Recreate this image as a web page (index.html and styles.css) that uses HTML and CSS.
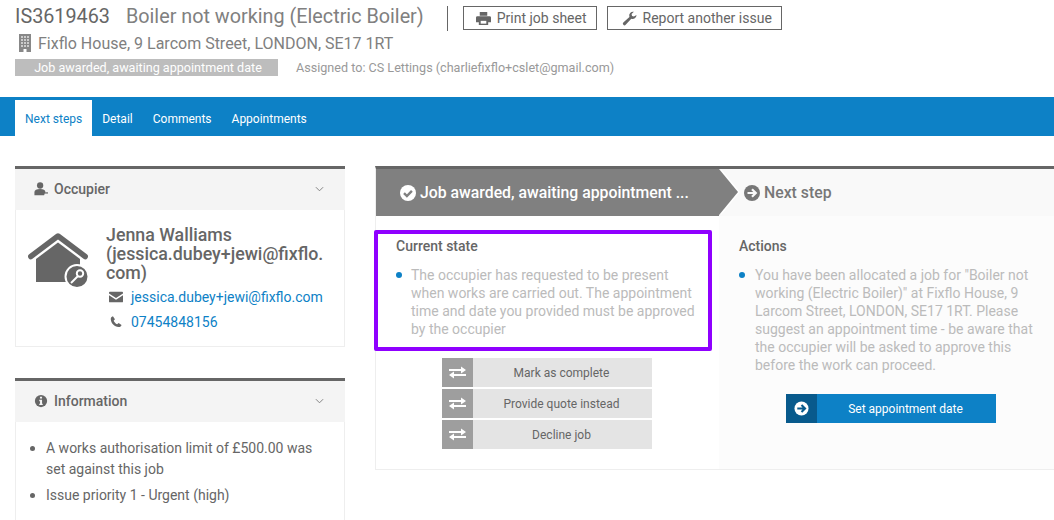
FILE: index.html
```html
<!DOCTYPE html>
<html>

<head>
    <meta charset="UTF-8">
    <title>IS3619463</title>
    <link rel="stylesheet" href="styles.css">
</head>

<body>
    <div class="job-head">
        <div class="title-row">
            <h1 class="job-title"><span class="job-ref">IS3619463</span>Boiler not working (Electric Boiler)</h1>
            <div class="head-btns">
                <a class="line-btn">
                    <svg class="icon" viewBox="0 0 16 16"><path d="M4 1h8v4H4z M1.500 5.500h13a1.500 1.500 0 0 1 1.500 1.500v5h-3v3H3v-3H0V7a1.500 1.500 0 0 1 1.500-1.500z" fill="#666"/><path d="M5 10.500h6V13.500H5z" fill="#fff"/></svg>
                    Print job sheet
                </a>
                <a class="line-btn">
                    <svg class="icon" viewBox="0 0 16 16"><path d="M15.500 4.300a4.200 4.200 0 0 1-5.600 3.900L3.900 14.700a1.700 1.700 0 0 1-2.500-2.400l6.500-6A4.200 4.200 0 0 1 12.700.8L10.200 3.300l.5 2 2 .5z" fill="#666"/></svg>
                    Report another issue
                </a>
            </div>
        </div>
        <div class="address">
            <svg class="icon-building" viewBox="0 0 14 18"><path d="M1 0h12v18H8.500v-3h-3v3H1z" fill="#888"/><path d="M3 2h2v2H3zM6 2h2v2H6zM9 2h2v2H9zM3 5h2v2H3zM6 5h2v2H6zM9 5h2v2H9zM3 8h2v2H3zM6 8h2v2H6zM9 8h2v2H9zM3 11h2v2H3zM6 11h2v2H6zM9 11h2v2H9z" fill="#ccc"/></svg>
            Fixflo House, 9 Larcom Street, LONDON, SE17 1RT
        </div>
        <div class="status-row">
            <span class="status">Job awarded, awaiting appointment date</span>
            <span class="assigned">Assigned to: CS Lettings (charliefixflo+cslet@gmail.com)</span>
        </div>
    </div>

    <ul class="tabs">
        <li class="cur">Next steps</li>
        <li>Detail</li>
        <li>Comments</li>
        <li>Appointments</li>
    </ul>

    <div class="content">
        <div class="side">
            <div class="panel">
                <div class="panel-head">
                    <svg class="icon" viewBox="0 0 16 16"><circle cx="7" cy="4" r="3.600" fill="#666"/><path d="M0.500 15v-3.500C0.500 9 3 8 7 8s5.500 1 6 3L11.500 15z" fill="#666"/><path d="M12 12.500h4" stroke="#666" stroke-width="1.400"/></svg>
                    <span>Occupier</span>
                    <svg class="chevron" viewBox="0 0 10 6"><path d="M1 1l4 4 4-4" fill="none" stroke="#777" stroke-width="1"/></svg>
                </div>
                <div class="panel-body occupier">
                    <svg class="house" viewBox="0 0 60 55">
                        <path d="M2.800 23.500L30 3l27.200 20.500" fill="none" stroke="#666" stroke-width="5.500" stroke-linecap="round" stroke-linejoin="round"/>
                        <path d="M8 26L30 9.500 52 26v23H8z" fill="#666"/>
                        <circle cx="49" cy="43.500" r="11.500" fill="#666" stroke="#fff" stroke-width="2"/>
                        <circle cx="52" cy="40.500" r="3.200" fill="none" stroke="#fff" stroke-width="2"/>
                        <path d="M50 43l-7 7" stroke="#fff" stroke-width="2"/>
                    </svg>
                    <div class="occupier-info">
                        <h2 class="occupier-name">Jenna Walliams (jessica.dubey+jewi@fixflo.<br>com)</h2>
                        <div class="contact">
                            <svg class="icon" viewBox="0 0 16 16"><path d="M1 2h14a1 1 0 0 1 1 1v1L8 9 0 4V3a1 1 0 0 1 1-1z M0 6l8 5 8-5v7a1 1 0 0 1-1 1H1a1 1 0 0 1-1-1z" fill="#666"/></svg>
                            <a>jessica.dubey+jewi@fixflo.com</a>
                        </div>
                        <div class="contact">
                            <svg class="icon" viewBox="0 0 16 16"><path d="M4.500 1.500l2.300 3.300-1.500 1.700c.8 1.800 2.200 3.200 4 4.100l1.700-1.600 3.300 2.300c-.5 1.700-1.800 2.700-3.300 2.500C6 13.300 2.500 9.600 2 4.800 1.900 3.300 2.900 2 4.500 1.500z" fill="#666"/></svg>
                            <a>07454848156</a>
                        </div>
                    </div>
                </div>
            </div>
            <div class="panel">
                <div class="panel-head">
                    <svg class="icon" viewBox="0 0 16 16"><circle cx="8" cy="8" r="7" fill="#666"/><path d="M6.800 3h2.400v2.200H6.800zM6 6.500h3.200V11H10v1.700H6V11h.9V8.200H6z" fill="#f4f4f4"/></svg>
                    <span>Information</span>
                    <svg class="chevron" viewBox="0 0 10 6"><path d="M1 1l4 4 4-4" fill="none" stroke="#777" stroke-width="1"/></svg>
                </div>
                <ul class="panel-body info-list">
                    <li>A works authorisation limit of £500.00 was set against this job</li>
                    <li>Issue priority 1 - Urgent (high)</li>
                </ul>
            </div>
        </div>

        <div class="flow">
            <div class="flow-col now">
                <div class="step step-now">
                    <svg class="step-icon" viewBox="0 0 16 16"><circle cx="8" cy="8" r="8" fill="#fff"/><path d="M4 8.200l2.900 2.900 5-5.200" fill="none" stroke="#808080" stroke-width="2.400"/></svg>
                    Job awarded, awaiting appointment ...
                </div>
                <div class="flow-body">
                    <h3 class="flow-title">Current state</h3>
                    <ul class="dots">
                        <li>The occupier has requested to be present when works are carried out. The appointment time and date you provided must be approved by the occupier</li>
                    </ul>
                    <div class="highlight"></div>
                </div>
                <div class="alt-btns">
                    <a class="icon-btn grey"><i><svg viewBox="0 0 17 13"><path d="M0 3h12V.5L17 4l-5 3.500V5H0z M17 8H5V5.500L0 9l5 3.500V10h12z" fill="#fff"/></svg></i><span>Mark as complete</span></a>
                    <a class="icon-btn grey"><i><svg viewBox="0 0 17 13"><path d="M0 3h12V.5L17 4l-5 3.500V5H0z M17 8H5V5.500L0 9l5 3.500V10h12z" fill="#fff"/></svg></i><span>Provide quote instead</span></a>
                    <a class="icon-btn grey"><i><svg viewBox="0 0 17 13"><path d="M0 3h12V.5L17 4l-5 3.500V5H0z M17 8H5V5.500L0 9l5 3.500V10h12z" fill="#fff"/></svg></i><span>Decline job</span></a>
                </div>
            </div>
            <div class="flow-col next">
                <div class="step step-next">
                    <svg class="step-icon" viewBox="0 0 16 16"><circle cx="8" cy="8" r="8" fill="#777"/><path d="M3.500 8h8M8 4.200L11.800 8 8 11.800" fill="none" stroke="#f9f9f9" stroke-width="2.200"/></svg>
                    Next step
                </div>
                <div class="flow-body">
                    <h3 class="flow-title">Actions</h3>
                    <ul class="dots">
                        <li>You have been allocated a job for "Boiler not working (Electric Boiler)" at Fixflo House, 9 Larcom Street, LONDON, SE17 1RT. Please suggest an appointment time - be aware that the occupier will be asked to approve this before the work can proceed.</li>
                    </ul>
                </div>
                <a class="icon-btn blue"><i><svg viewBox="0 0 16 16"><circle cx="8" cy="8" r="7.500" fill="#fff"/><path d="M3.500 8h8M8 4.200L11.800 8 8 11.800" fill="none" stroke="#085a8c" stroke-width="2.200"/></svg></i><span>Set appointment date</span></a>
            </div>
        </div>
    </div>
</body>

</html>
```

FILE: styles.css
```css
body,
p,
ul,
li,
h1,
h2,
h3 {
    margin: 0;
    padding: 0;
}

ul {
    list-style: none;
}

html,
body {
    height: 100%;
    overflow: hidden;
}

body {
    font-family: Roboto, "Liberation Sans", sans-serif;
    font-size: 14px;
    color: #666;
    background: #fff;
}

.icon {
    display: block;
    flex: none;
    width: 14px;
    height: 14px;
}

/* header */
.job-head {
    height: 97px;
    padding: 5px 0 0 15px;
    box-sizing: border-box;
}

.title-row {
    display: flex;
    align-items: center;
    height: 24px;
}

.job-title {
    font-size: 19.800px;
    line-height: 24px;
    font-weight: 400;
    color: #808080;
    white-space: nowrap;
}

.job-ref {
    color: #666;
    margin-right: 16px;
}

.head-btns {
    display: flex;
    gap: 10px;
    height: 25px;
    margin: 3px 0 0 23px;
    padding-left: 15px;
    border-left: 1px solid #666;
    align-items: flex-start;
}

.line-btn {
    display: flex;
    align-items: center;
    gap: 6px;
    height: 24px;
    padding: 0 9px 0 12px;
    box-sizing: border-box;
    border: 1px solid #666;
    font-size: 14px;
    color: #666;
}

.line-btn + .line-btn {
    padding-left: 14px;
}

.line-btn .icon {
    width: 15px;
    height: 15px;
}

.address {
    display: flex;
    align-items: center;
    gap: 6px;
    margin: 2px 0 0 3px;
    height: 24px;
    font-size: 16px;
    color: #808080;
}

.icon-building {
    width: 14px;
    height: 18px;
}

.status-row {
    display: flex;
    align-items: center;
    margin-top: 4px;
    height: 17px;
}

.status {
    width: 263px;
    height: 17px;
    padding-left: 3px;
    box-sizing: border-box;
    background: #bdbdbd;
    color: #fff;
    font-size: 12.600px;
    line-height: 17px;
    text-align: center;
}

.assigned {
    margin-left: 18px;
    font-size: 12.600px;
    color: #999;
}

/* tabs */
.tabs {
    display: flex;
    align-items: flex-end;
    height: 39px;
    padding-left: 15px;
    background: #0d81c6;
}

.tabs li {
    height: 36px;
    padding: 0 10px;
    font-size: 12px;
    line-height: 38px;
    color: #fff;
}

.tabs li.cur {
    background: #fff;
    color: #0d81c6;
}

/* content */
.content {
    display: flex;
    gap: 30px;
    padding: 30px 0 0 15px;
    align-items: flex-start;
}

.side {
    display: flex;
    flex-direction: column;
    gap: 31px;
    flex: none;
    width: 330px;
}

.panel {
    border-top: 3px solid #666;
}

.panel-head {
    display: flex;
    align-items: center;
    gap: 6px;
    height: 41px;
    box-sizing: border-box;
    padding: 0 21px 2px 19px;
    background: #f4f4f4;
    font-size: 14px;
    font-weight: 500;
}

.chevron {
    width: 9px;
    height: 6px;
    margin-left: auto;
}

.panel-body {
    border: 1px solid #eee;
    border-top: none;
}

.occupier {
    display: flex;
    height: 137px;
    box-sizing: border-box;
    padding: 15px 0 0 12px;
}

.house {
    flex: none;
    width: 60px;
    height: 55px;
    margin-top: 8px;
}

.occupier-info {
    margin-left: 18px;
    min-width: 0;
}

.occupier-name {
    font-size: 17.800px;
    line-height: 19px;
    font-weight: 500;
    color: #666;
}

.contact {
    display: flex;
    align-items: center;
    gap: 8px;
    height: 25px;
    margin-left: 3px;
}

.contact:first-of-type {
    margin-top: 2px;
}

.contact a {
    color: #0d81c6;
    font-size: 14px;
}

.info-list {
    padding: 16px 20px 30px 14px;
    line-height: 21px;
}

.info-list li {
    position: relative;
    margin-bottom: 5px;
    padding-left: 16px;
}

.info-list li:before {
    content: "";
    position: absolute;
    left: 0;
    top: 8px;
    width: 5px;
    height: 5px;
    border-radius: 50%;
    background: #666;
}

/* right hand flow */
.flow {
    flex: 1;
    display: flex;
    height: 300px;
    border-top: 3px solid #666;
    border-left: 1px solid #eee;
    border-bottom: 1px solid #eee;
}

.flow-col {
    display: flex;
    flex-direction: column;
}

.now {
    flex: none;
    width: 343px;
}

.next {
    flex: 1;
    background: #fcfcfc;
}

.step {
    display: flex;
    align-items: center;
    flex: none;
    height: 47px;
    box-sizing: border-box;
    font-size: 15.800px;
    font-weight: 500;
    white-space: nowrap;
}

.step-icon {
    flex: none;
    width: 16px;
    height: 16px;
    margin-right: 4px;
}

.step-now {
    position: relative;
    z-index: 1;
    padding-left: 24px;
    background: #808080;
    color: #fff;
}

.step-now:before,
.step-now:after {
    content: "";
    position: absolute;
    top: 0;
    width: 0;
    height: 0;
    border-style: solid;
    border-width: 23.500px 0 23.500px 19px;
    border-color: transparent;
}

.step-now:before {
    right: -21px;
    border-left-color: #fff;
}

.step-now:after {
    right: -19px;
    border-left-color: #808080;
}

.step-next {
    padding-left: 25px;
    background: #f9f9f9;
    color: #777;
}

.flow-body {
    position: relative;
    padding: 22px 20px 0;
}

.flow-title {
    font-size: 14px;
    line-height: 16px;
    font-weight: 500;
    color: #666;
}

.dots {
    margin-top: 12px;
    line-height: 18px;
    font-size: 14px;
    color: #bbb;
}

.dots li {
    position: relative;
    padding-left: 15px;
}

.next .dots li {
    padding-left: 16px;
}

.dots li:before {
    content: "";
    position: absolute;
    left: 0;
    top: 6px;
    width: 6px;
    height: 6px;
    border-radius: 50%;
    background: #0d81c6;
}

.highlight {
    position: absolute;
    left: -2px;
    top: 14px;
    width: 338px;
    height: 121px;
    box-sizing: border-box;
    border: 4px solid #8f00ff;
    border-radius: 2px;
}

.alt-btns {
    display: flex;
    flex-direction: column;
    gap: 2px;
    margin: 20px 0 0 66px;
}

.icon-btn {
    display: flex;
    width: 210px;
    height: 29px;
    font-size: 12px;
    line-height: 30px;
}

.icon-btn i {
    display: flex;
    align-items: center;
    justify-content: center;
    flex: none;
    width: 31px;
}

.icon-btn span {
    flex: 1;
    padding-right: 2px;
    text-align: center;
}

.grey i {
    background: #9e9e9e;
}

.grey i svg {
    width: 17px;
    height: 13px;
}

.grey span {
    background: #e4e4e4;
    color: #666;
}

.blue {
    margin: 20px 0 0 67px;
}

.blue i {
    background: #085a8c;
}

.blue i svg {
    width: 15px;
    height: 15px;
}

.blue span {
    background: #0d81c6;
    color: #fff;
}
```
